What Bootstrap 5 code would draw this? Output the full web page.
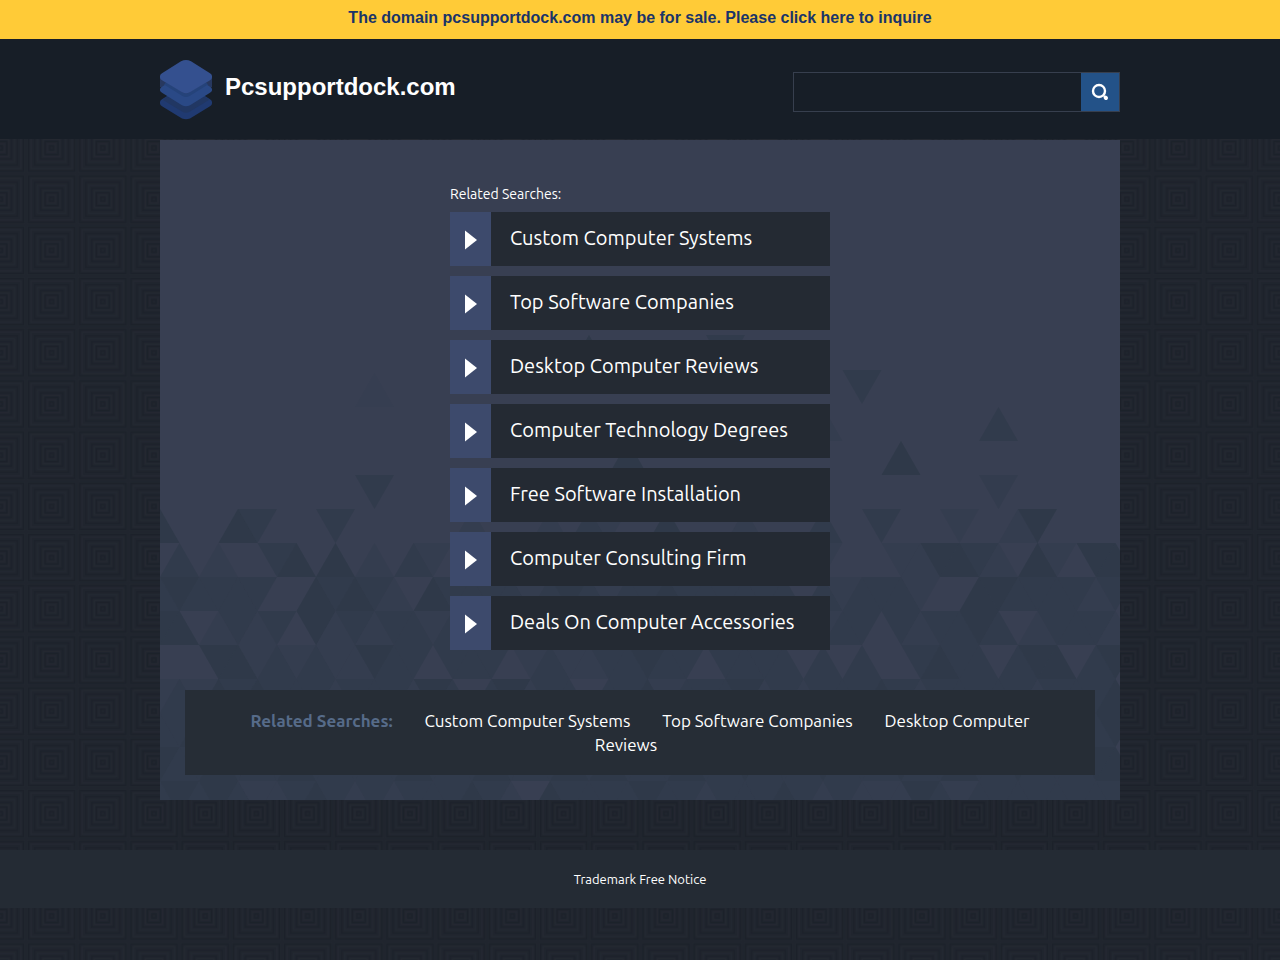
<!DOCTYPE html>
<html lang="en">
<head>
<meta charset="utf-8">
<title>Pcsupportdock.com</title>
<meta name="viewport" content="width=device-width, initial-scale=1">
<link href="https://cdn.jsdelivr.net/npm/bootstrap@5.3.0/dist/css/bootstrap.min.css" rel="stylesheet">
<style>
  body {
    font-family: Ubuntu, "Noto Sans", sans-serif;
    color: #fff;
    background: #20252e url("data:image/svg+xml,%3Csvg xmlns='http://www.w3.org/2000/svg' width='256' height='256'%3E%3Cdefs%3E%3Cpattern id='p' width='51.2' height='51.2' patternUnits='userSpaceOnUse'%3E%3Cg fill='none' stroke='%231c212a' stroke-width='1.4'%3E%3Crect x='2.6' y='2.6' width='46' height='46'/%3E%3Crect x='8.6' y='8.6' width='34' height='34'/%3E%3Crect x='14.6' y='14.6' width='22' height='22'/%3E%3Crect x='19.1' y='19.1' width='13' height='13'/%3E%3Crect x='23.6' y='23.6' width='4' height='4'/%3E%3C/g%3E%3Cg fill='none' stroke='%23232831' stroke-width='1.2'%3E%3Crect x='5.1' y='5.1' width='41' height='41'/%3E%3Crect x='11.6' y='11.6' width='28' height='28'/%3E%3Crect x='17.1' y='17.1' width='17' height='17'/%3E%3Crect x='21.6' y='21.6' width='8' height='8'/%3E%3C/g%3E%3C/pattern%3E%3C/defs%3E%3Crect width='256' height='256' fill='url(%23p)'/%3E%3C/svg%3E") 26px 20px;
  }
  a { color: inherit; text-decoration: none; }
  a:hover { text-decoration: underline; }
  .sans { font-family: "Liberation Sans", Arial, sans-serif; }
  .wrap { max-width: 960px; }
  .sale-bar { background: #ffcb37; color: #1a3468; font-size: 16px; line-height: 24px; padding: 6px 0 9px; }
  .site-head { background: #171e27; min-height: 100px; }
  .brand-link { gap: 13px; padding-top: 1px; }
  .brand-name { font-size: 24px; line-height: 32px; margin-bottom: 5px; }
  .search-box { width: 327px; height: 40px; border: 1px solid #373f4e; margin-top: 6px; }
  .search-box input { background: transparent; border: 0; color: #fff; min-width: 0; padding: 0 10px; }
  .search-box button { width: 38px; border: 0; background: #235288; }
  .panel { background: #383f52; margin-top: 1px; padding: 42px 25px 25px; }
  .facets { position: absolute; inset: 0; width: 100%; height: 100%; }
  .searches { max-width: 380px; margin-bottom: 40px; }
  .searches h2 { font-size: 14px; line-height: 24px; margin-bottom: 6px; }
  .terms { gap: 10px; }
  .term { background: #242a33; min-height: 54px; font-size: 20px; line-height: 30px; }
  .term-mark { width: 41px; background: #3d4a6c; padding-top: 1px; }
  .term-text { padding: 11px 19px 13px; }
  .related { background: #262d36; padding: 19px 50px 18px; font-size: 17px; line-height: 24px; }
  .related strong { color: #566b89; }
  .related a, .related strong { margin-right: 28px; }
  .site-foot { background: #242b34; margin-top: 50px; padding: 19px 0; font-size: 13px; line-height: 20px; }
</style>
</head>
<body>
<div class="sale-bar sans fw-bold text-center"><a href="#">The domain pcsupportdock.com may be for sale. Please click here to inquire</a></div>

<header class="site-head d-flex">
  <div class="wrap container-fluid px-0 d-flex flex-wrap align-items-center justify-content-between">
    <a href="#" class="brand-link d-flex align-items-center">
      <svg width="52" height="60" viewBox="0 0 52 60" aria-hidden="true">
        <path d="M0 42q0-1.500 2-2.700L22 26.500q4-2.500 8 0l20 12.800q2 1.200 2 2.700v1.500q0 1.500-2 2.700L30 58.500q-4 1.500-8 0L2 46.200q-2-1.200-2-2.700z" fill="#203a71"/>
        <path d="M5 38l18-8h6l18 8 2 2-19 11.500q-4 2.500-8 0L3 40z" fill="#213763"/>
        <path d="M0 17h52v10l-7 4-19 10L7 31l-7-4z" fill="#27385f"/>
        <path d="M0 29q0-1 2-2.200l5-3.300L23 33q3 1.500 6 0l16-9.500 5 3.300q2 1.200 2 2.200v1.500q0 1-2 2.200L30 45.200q-4 2-8 0L2 32.700q-2-1.200-2-2.200z" fill="#2a4986"/>
        <path d="M4 24.500l2-2L22 32.500q4 2.500 8 0l16-10 2 2-18 11.300q-4 2.500-8 0z" fill="#25437a"/>
        <path d="M0 16q0-1.500 2-2.700L21 1.300q5-2.600 10 0l19 12q2 1.200 2 2.700v1.500q0 1.500-2 2.700L30 32.300q-4 2.200-8 0L2 20.200q-2-1.200-2-2.700z" fill="#34508f"/>
      </svg>
      <span class="brand-name sans fw-bold">Pcsupportdock.com</span>
    </a>
    <form class="search-box d-flex" role="search">
      <input type="search" class="flex-grow-1" aria-label="Search">
      <button type="submit" class="p-0 d-flex align-items-center justify-content-center" aria-label="Submit search">
        <svg width="18" height="18" viewBox="0 0 18 18" fill="none" stroke="#fff"><circle cx="8" cy="8" r="6" stroke-width="2.400"/><path d="M14.600 14.600l.4.4" stroke-width="4" stroke-linecap="round"/><path d="M12 12l2 2" stroke-width="1.500"/></svg>
      </button>
    </form>
  </div>
</header>

<main class="panel wrap container-fluid position-relative">
  <svg class="facets" id="facets" viewBox="0 0 960 660" preserveAspectRatio="xMidYMax slice" aria-hidden="true"></svg>
  <section class="searches mx-auto position-relative">
    <h2 class="fw-normal">Related Searches:</h2>
    <div class="terms d-grid">
      <a href="#" class="term d-flex"><span class="term-mark d-flex align-items-center justify-content-center"><svg width="12" height="20"><path d="M0 0.500L12 10 0 19.500z" fill="#fff"/></svg></span><span class="term-text">Custom Computer Systems</span></a>
      <a href="#" class="term d-flex"><span class="term-mark d-flex align-items-center justify-content-center"><svg width="12" height="20"><path d="M0 0.500L12 10 0 19.500z" fill="#fff"/></svg></span><span class="term-text">Top Software Companies</span></a>
      <a href="#" class="term d-flex"><span class="term-mark d-flex align-items-center justify-content-center"><svg width="12" height="20"><path d="M0 0.500L12 10 0 19.500z" fill="#fff"/></svg></span><span class="term-text">Desktop Computer Reviews</span></a>
      <a href="#" class="term d-flex"><span class="term-mark d-flex align-items-center justify-content-center"><svg width="12" height="20"><path d="M0 0.500L12 10 0 19.500z" fill="#fff"/></svg></span><span class="term-text">Computer Technology Degrees</span></a>
      <a href="#" class="term d-flex"><span class="term-mark d-flex align-items-center justify-content-center"><svg width="12" height="20"><path d="M0 0.500L12 10 0 19.500z" fill="#fff"/></svg></span><span class="term-text">Free Software Installation</span></a>
      <a href="#" class="term d-flex"><span class="term-mark d-flex align-items-center justify-content-center"><svg width="12" height="20"><path d="M0 0.500L12 10 0 19.500z" fill="#fff"/></svg></span><span class="term-text">Computer Consulting Firm</span></a>
      <a href="#" class="term d-flex"><span class="term-mark d-flex align-items-center justify-content-center"><svg width="12" height="20"><path d="M0 0.500L12 10 0 19.500z" fill="#fff"/></svg></span><span class="term-text">Deals On Computer Accessories</span></a>
    </div>
  </section>
  <nav class="related text-center position-relative" aria-label="Related searches">
    <strong>Related Searches:</strong>
    <a href="#">Custom Computer Systems</a>
    <a href="#">Top Software Companies</a>
    <a href="#">Desktop Computer Reviews</a>
  </nav>
</main>

<footer class="site-foot text-center"><a href="#">Trademark Free Notice</a></footer>

<script src="https://cdn.jsdelivr.net/npm/bootstrap@5.3.0/dist/js/bootstrap.bundle.min.js"></script>
<script>
  // Triangle mosaic: each row is [top, parity of the upward triangles, shade of every triangle from left to right].
  const half = 19.5, height = 34;
  const rows = [
    [369, 0, "30003200020000001000102100300010002002000100130000"],
    [403, 1, "02010023030102103020203210230102011000113321031033"],
    [437, 0, "23222200323210322221232122322222202122210033222212"],
    [471, 1, "33012120312122122221221222212222221220212232012221"],
    [505, 0, "00033121211322022201211223220222202020023220233023"],
    [539, 1, "12132322212221320231220223122231212223212222212223"],
    [573, 0, "22322322232223212322321232223212232221232223223223"],
    [607, 1, "32232223222223222322232322232232223222322322322233"],
    [641, 0, "23232112321212223210322223221222321211132122222222"]
  ];
  const singles = [
    [195, 22, 1, 3], [195, 29, 0, 2], [230, 36, 0, 2], [233, 11, 1, 0.5], [267, 43, 1, 2], [267, 34, 1, 1],
    [301, 38, 1, 3], [301, 24, 1, 3], [335, 43, 0, 1.5], [335, 11, 0, 2]
  ];
  const tri = (y, k, up, shade) => {
    const x = k * half, a = up ? y + height : y, b = up ? y : y + height;
    return `<path d="M${x - half} ${a}H${x + half}L${x} ${b}z" fill="#2a3645" fill-opacity="${shade * 0.22}"/>`;
  };
  let art = singles.map(s => tri(...s)).join("");
  for (const [y, odd, cells] of rows)
    [...cells].forEach((c, k) => { if (+c) art += tri(y, k, (k + odd) % 2 === 0, +c); });
  document.getElementById("facets").innerHTML = art;
</script>
</body>
</html>
